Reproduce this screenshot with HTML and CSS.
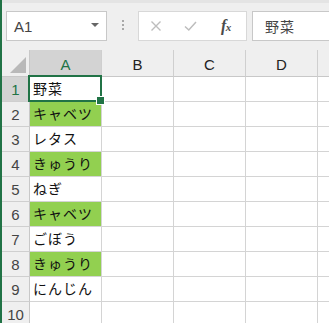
FILE: index.html
```html
<!DOCTYPE html>
<html lang="ja">
<head>
  <meta charset="UTF-8" />
  <title>Book1 - Excel</title>
  <link rel="stylesheet" href="styles.css">
</head>
<body>

  <div class="app">
    <div class="formula-bar">
      <div class="name-box">
        <span>A1</span>
        <span class="caret"></span>
      </div>
      <div class="grip"><i></i><i></i><i></i></div>
      <div class="fx-tools">
        <svg class="tool" width="12" height="12" viewBox="0 0 12 12">
          <path d="M1.5 1.5 L10.5 10.5 M10.5 1.5 L1.5 10.5" stroke="#bdbdbd" stroke-width="1.4" fill="none"/>
        </svg>
        <svg class="tool" width="13" height="12" viewBox="0 0 13 12">
          <path d="M1 6.5 L4.8 10 L12 2" stroke="#bdbdbd" stroke-width="1.5" fill="none"/>
        </svg>
        <span class="fx">f<small>x</small></span>
      </div>
      <div class="formula-input">野菜</div>
    </div>

    <div class="sheet">
      <div class="corner"><span class="tri"></span></div>
      <div class="col-head selected">A</div>
      <div class="col-head">B</div>
      <div class="col-head">C</div>
      <div class="col-head">D</div>
      <div class="col-head"></div>

      <div class="row-head selected">1</div>
      <div class="cell active">野菜</div>
      <div class="cell"></div><div class="cell"></div><div class="cell"></div><div class="cell"></div>

      <div class="row-head">2</div>
      <div class="cell green">キャベツ</div>
      <div class="cell"></div><div class="cell"></div><div class="cell"></div><div class="cell"></div>

      <div class="row-head">3</div>
      <div class="cell">レタス</div>
      <div class="cell"></div><div class="cell"></div><div class="cell"></div><div class="cell"></div>

      <div class="row-head">4</div>
      <div class="cell green">きゅうり</div>
      <div class="cell"></div><div class="cell"></div><div class="cell"></div><div class="cell"></div>

      <div class="row-head">5</div>
      <div class="cell">ねぎ</div>
      <div class="cell"></div><div class="cell"></div><div class="cell"></div><div class="cell"></div>

      <div class="row-head">6</div>
      <div class="cell green">キャベツ</div>
      <div class="cell"></div><div class="cell"></div><div class="cell"></div><div class="cell"></div>

      <div class="row-head">7</div>
      <div class="cell">ごぼう</div>
      <div class="cell"></div><div class="cell"></div><div class="cell"></div><div class="cell"></div>

      <div class="row-head">8</div>
      <div class="cell green">きゅうり</div>
      <div class="cell"></div><div class="cell"></div><div class="cell"></div><div class="cell"></div>

      <div class="row-head">9</div>
      <div class="cell">にんじん</div>
      <div class="cell"></div><div class="cell"></div><div class="cell"></div><div class="cell"></div>

      <div class="row-head">10</div>
      <div class="cell"></div>
      <div class="cell"></div><div class="cell"></div><div class="cell"></div><div class="cell"></div>
    </div>
  </div>

</body>
</html>
```

FILE: styles.css
```css
/* Base */
* {
  margin: 0;
  padding: 0;
  box-sizing: border-box;
}

body {
  font-family: "Noto Sans CJK JP", "Noto Sans", sans-serif;
  background: #fff;
  overflow: hidden;
}

.app {
  width: 329px;
  height: 323px;
  border-left: 2px solid #217346;
  overflow: hidden;
  display: flex;
  flex-direction: column;
}

/* Formula bar */
.formula-bar {
  height: 50px;
  flex: none;
  background: #efefef;
  border-top: 3px solid #e4e4e4;
  display: flex;
  align-items: flex-start;
  padding: 8px 0 0 4px;
  overflow: hidden;
}

.formula-bar > * {
  flex: none;
}

.name-box {
  width: 101px;
  height: 30px;
  background: #fff;
  border: 1px solid #c8c8c8;
  display: flex;
  align-items: center;
  justify-content: space-between;
  padding: 0 7px 0 7px;
  font-family: "Liberation Sans", Arial, sans-serif;
  font-size: 15px;
  color: #444;
}

.caret {
  width: 0;
  height: 0;
  border-left: 4px solid transparent;
  border-right: 4px solid transparent;
  border-top: 4px solid #666;
  margin-top: -2px;
}

.grip {
  width: 2px;
  margin: 9px 14px 0 15px;
  display: flex;
  flex-direction: column;
  gap: 2px;
}

.grip i {
  width: 2px;
  height: 2px;
  background: #a8a8a8;
}

.fx-tools {
  width: 109px;
  height: 30px;
  background: #fff;
  border: 1px solid #d8d8d8;
  display: flex;
  align-items: center;
  padding-left: 11px;
  gap: 22px;
}

.fx {
  font-family: "Liberation Serif", serif;
  font-style: italic;
  font-weight: bold;
  font-size: 16px;
  color: #4a4a4a;
  margin-left: 2px;
  letter-spacing: -0.5px;
}

.fx small {
  font-size: 11px;
}

.formula-input {
  width: 120px;
  height: 30px;
  margin-left: 5px;
  background: #fff;
  border: 1px solid #c8c8c8;
  padding-left: 12px;
  font-size: 14px;
  letter-spacing: 1px;
  line-height: 28px;
  color: #444;
}

/* Sheet grid */
.sheet {
  display: grid;
  grid-template-columns: 28px repeat(5, 72px);
  grid-template-rows: 27px;
  grid-auto-rows: 25px;
}

.corner {
  background: #efefef;
  border-right: 1px solid #c8c8c8;
  border-bottom: 1px solid #c8c8c8;
  position: relative;
}

.tri {
  position: absolute;
  right: 3px;
  bottom: 3px;
  width: 0;
  height: 0;
  border-left: 16px solid transparent;
  border-bottom: 16px solid #b9b9b9;
}

.col-head {
  background: #efefef;
  border-right: 1px solid #cfcfcf;
  border-bottom: 1px solid #c8c8c8;
  font-family: "Liberation Sans", Arial, sans-serif;
  font-size: 15px;
  color: #222;
  text-align: center;
  line-height: 30px;
}

.row-head {
  background: #efefef;
  border-right: 1px solid #c8c8c8;
  border-bottom: 1px solid #cfcfcf;
  font-family: "Liberation Sans", Arial, sans-serif;
  font-size: 15px;
  color: #444;
  text-align: center;
  line-height: 25px;
}

.col-head.selected,
.row-head.selected {
  background: #d3d3d3;
  color: #217346;
}

.cell {
  border-right: 1px solid #d4d4d4;
  border-bottom: 1px solid #d4d4d4;
  font-size: 14px;
  letter-spacing: 1px;
  line-height: 23px;
  padding-left: 3px;
  color: #111;
  white-space: nowrap;
}

.cell.green {
  background: #92d050;
}

.cell.active {
  position: relative;
  z-index: 2;
}

.cell.active::after {
  content: "";
  position: absolute;
  top: -2px;
  left: -2px;
  right: -1px;
  bottom: -1px;
  border: 2px solid #217346;
}

.cell.active::before {
  content: "";
  position: absolute;
  right: -4px;
  bottom: -4px;
  width: 7px;
  height: 7px;
  background: #217346;
  border: 1px solid #fff;
  z-index: 3;
}
```
